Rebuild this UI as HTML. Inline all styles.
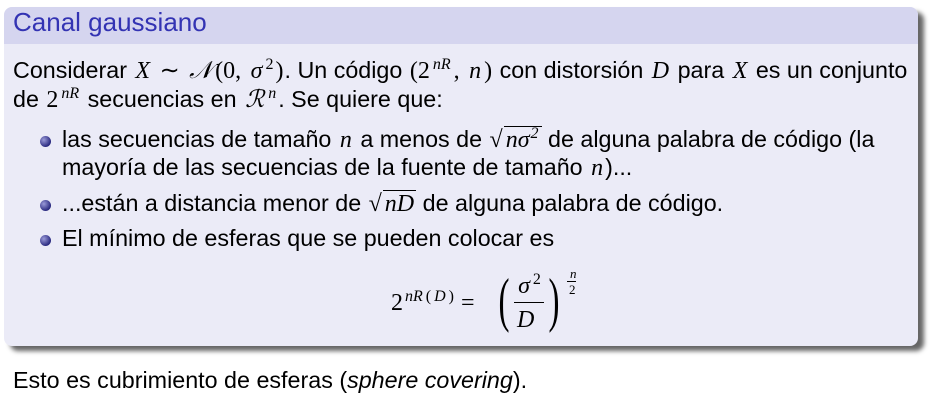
<!DOCTYPE html><html><head><meta charset="utf-8"><style>
body{margin:0;width:932px;height:408px;background:#fff;position:relative;overflow:hidden;font-family:"Liberation Sans",sans-serif;font-size:23.3px;color:#000}
.blk{position:absolute;left:4px;top:7px;width:914px;height:339px;border-radius:8px;background:#ebebf7;box-shadow:6px 5px 5px #666;overflow:hidden}
.hd{position:absolute;left:0;top:0;width:100%;height:37px;background:#d5d5ef}
.t{position:absolute;white-space:nowrap;left:0}
.m{font-family:"Liberation Serif",serif;font-style:italic;font-size:24px;padding:0 2px}
.r{font-family:"Liberation Serif",serif;font-size:24px;padding:0 1px}
sup{font-size:16px !important;line-height:0;vertical-align:9px}
.b{position:absolute;left:40px;width:11px;height:11px;border-radius:50%;background:radial-gradient(circle at 35% 35%,#9a9ad8,#2a2a80 70%)}
</style></head><body>
<div class="blk"><div class="hd"></div></div>
<div class="t" style="left:13px;top:7px;color:#3333b3;font-size:26px">Canal gaussiano</div>
<div class="t" style="left:13px;top:56px">Considerar <span class="m">X</span> <span class="r">∼</span> <span class="m">𝒩</span><span class="r">(0,</span> <span class="m">σ</span><sup class="r">2</sup><span class="r">)</span>. Un código <span class="r">(2</span><sup class="m">nR</sup><span class="r">,</span> <span class="m">n</span><span class="r">)</span> con distorsión <span class="m">D</span> para <span class="m">X</span> es un conjunto</div>
<div class="t" style="left:13px;top:85px">de <span class="r">2</span><sup class="m">nR</sup> secuencias en <span class="m">ℛ</span><sup class="m">n</sup>. Se quiere que:</div>
<div class="b" style="top:136px"></div>
<div class="t" style="left:62px;top:126px">las secuencias de tamaño <span class="m">n</span> a menos de <span class="r">√</span><span class="m" style="border-top:1px solid #000">nσ<sup class="r">2</sup></span> de alguna palabra de código (la</div>
<div class="t" style="left:62px;top:154px">mayoría de las secuencias de la fuente de tamaño <span class="m">n</span>)...</div>
<div class="b" style="top:200px"></div>
<div class="t" style="left:62px;top:190px">...están a distancia menor de <span class="r">√</span><span class="m" style="border-top:1px solid #000">nD</span> de alguna palabra de código.</div>
<div class="b" style="top:235px"></div>
<div class="t" style="left:62px;top:225px">El mínimo de esferas que se pueden colocar es</div>
<div class="t r" style="left:390px;top:290px">2<sup class="m">nR</sup><sup class="r">(</sup><sup class="m">D</sup><sup class="r">)</sup> =</div>
<div class="t r" style="left:498px;top:266px;font-size:60px;transform:scaleX(.55);transform-origin:left">(</div>
<div class="t" style="left:512px;top:272px;width:34px;text-align:center"><span class="m">σ</span><sup class="r">2</sup></div>
<div style="position:absolute;left:514px;top:302px;width:30px;height:1px;background:#000"></div>
<div class="t m" style="left:515px;top:307px">D</div>
<div class="t r" style="left:548px;top:266px;font-size:60px;transform:scaleX(.55);transform-origin:left">)</div>
<div class="t m" style="left:568px;top:266px;font-size:13px">n</div>
<div style="position:absolute;left:567px;top:281px;width:9px;height:1px;background:#000"></div>
<div class="t r" style="left:568px;top:282px;font-size:13px">2</div>
<div class="t" style="left:13px;top:367px">Esto es cubrimiento de esferas (<i>sphere covering</i>).</div>
</body></html>
